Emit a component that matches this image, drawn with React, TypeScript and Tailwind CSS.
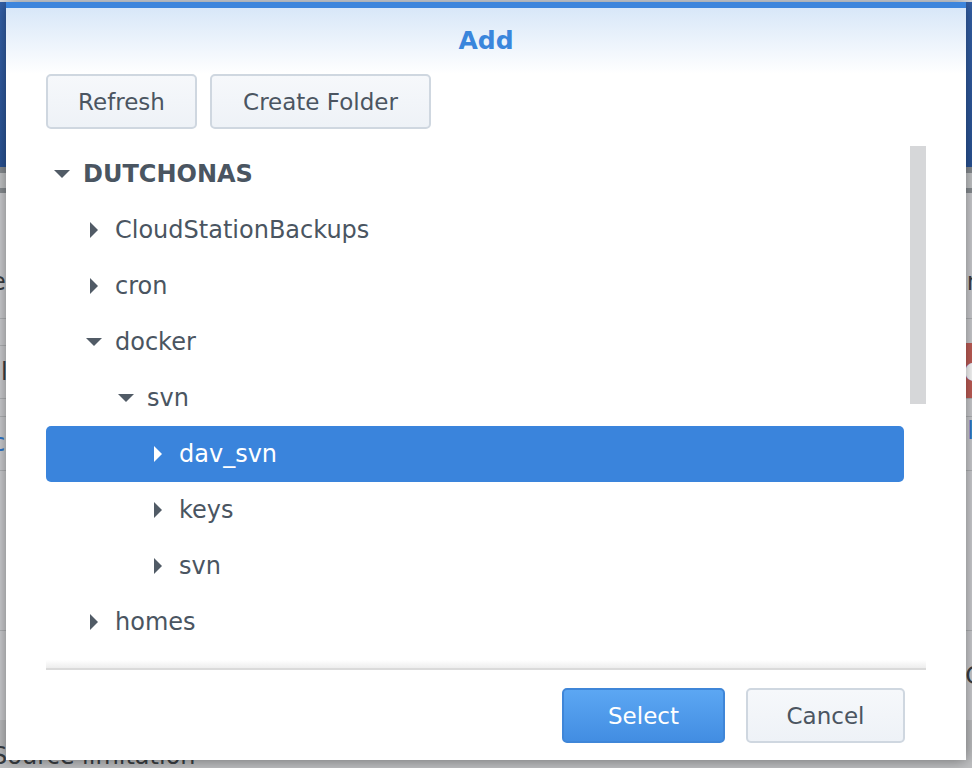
import { useState } from 'react';

type Node = { id: string; label: string; level: number; open?: boolean; bold?: boolean };

const nodes: Node[] = [
  { id: 'root', label: 'DUTCHONAS', level: 0, open: true, bold: true },
  { id: 'csb', label: 'CloudStationBackups', level: 1 },
  { id: 'cron', label: 'cron', level: 1 },
  { id: 'docker', label: 'docker', level: 1, open: true },
  { id: 'svn', label: 'svn', level: 2, open: true },
  { id: 'dav_svn', label: 'dav_svn', level: 3 },
  { id: 'keys', label: 'keys', level: 3 },
  { id: 'svn2', label: 'svn', level: 3 },
  { id: 'homes', label: 'homes', level: 1 },
  { id: 'music', label: 'music', level: 1 },
];

const indent = ['pl-[6px]', 'pl-[38px]', 'pl-[70px]', 'pl-[102px]'];

function Arrow({ open, light }: { open?: boolean; light?: boolean }) {
  const fill = light ? '#ffffff' : '#515b66';
  return (
    <span className="w-[20px] h-[20px] flex items-center justify-center shrink-0">
      {open ? (
        <svg width="16" height="8" viewBox="0 0 16 8">
          <path d="M0 0 L16 0 L8 8 Z" fill={fill} />
        </svg>
      ) : (
        <svg width="8" height="16" viewBox="0 0 8 16">
          <path d="M0 0 L8 8 L0 16 Z" fill={fill} />
        </svg>
      )}
    </span>
  );
}

function Background() {
  return (
    <div className="w-full h-screen flex flex-col bg-[#cfd0d3] text-[24px] font-['DejaVu_Sans',sans-serif] text-[#3a3f44] overflow-hidden">
      <div className="h-[2px] bg-[#dde2ea]" />
      <div className="h-[165px] bg-gradient-to-b from-[#3563ad] to-[#2b5598]" />
      <div className="h-[6px] bg-[#8b9095]" />
      <div className="h-[15px] bg-[#c6c8ca]" />
      <div className="h-[5px] bg-[#8b9095]" />
      <div className="h-[125px] flex justify-between items-start pt-[77px] leading-[24px]">
        <span className="-ml-[9px]">e</span>
        <span className="-mr-[10px]">n</span>
      </div>
      <div className="h-px bg-[#b3b5b8]" />
      <div className="h-[26px]" />
      <div className="h-px bg-[#b3b5b8]" />
      <div className="h-[52px] flex justify-between items-center">
        <span className="ml-[1px]">l</span>
        <span className="h-[55px] w-[60px] -mt-[3px] -mr-[50px] bg-[#c35f58] rounded-[4px] flex items-center pl-[2px] text-white">●</span>
      </div>
      <div className="h-px bg-[#b3b5b8]" />
      <div className="h-[17px]" />
      <div className="h-px bg-[#b3b5b8]" />
      <div className="h-[54px] flex justify-between items-center text-[#2f78d0]">
        <span className="-ml-[8px]">c</span>
        <span className="-mr-[2px] -mt-[24px]">l</span>
      </div>
      <div className="h-px bg-[#b3b5b8]" />
      <div className="h-[159px]" />
      <div className="h-px bg-[#b3b5b8]" />
      <div className="h-[89px] flex justify-end items-center">
        <span className="-mr-[10px]">C</span>
      </div>
      <div className="flex-1 bg-[#bfc0c2] pt-[24px] leading-[24px]">
        <span className="-ml-[8px] block">Source limitation</span>
      </div>
    </div>
  );
}

export default function App() {
  const [selected, setSelected] = useState('dav_svn');

  return (
    <div className="relative w-full h-screen overflow-hidden">
      <Background />

      {/* Dialog */}
      <div className="absolute left-[6px] top-[2px] w-[960px] h-[758px] bg-white border-t-[6px] border-[#3d85dc] shadow-[0_0_14px_rgba(0,0,0,0.45)] flex flex-col font-['DejaVu_Sans',sans-serif]">
        <div className="h-[66px] shrink-0 bg-gradient-to-b from-[#d8e7f8] to-white flex items-center justify-center">
          <span className="text-[25px] font-bold text-[#3a86dc]">Add</span>
        </div>

        <div className="h-[55px] shrink-0 flex gap-[13px] px-[40px]">
          <button className="w-[151px] h-full pt-[2px] rounded-[5px] border-2 border-[#cfd7e0] bg-gradient-to-b from-[#f6f8fb] to-[#eef2f7] text-[23px] text-[#4b5561]">
            Refresh
          </button>
          <button className="w-[221px] h-full pt-[2px] rounded-[5px] border-2 border-[#cfd7e0] bg-gradient-to-b from-[#f6f8fb] to-[#eef2f7] text-[23px] text-[#4b5561]">
            Create Folder
          </button>
        </div>

        <div className="mt-[17px] mx-[40px] flex flex-col">
          <div className="h-[514px] flex gap-[6px] overflow-hidden">
            <div className="flex-1 flex flex-col">
              {nodes.map(n => {
                const isSel = n.id === selected;
                return (
                  <div
                    key={n.id}
                    onClick={() => setSelected(n.id)}
                    className={`h-[56px] shrink-0 flex items-center rounded-[5px] ${indent[n.level]} ${
                      isSel ? 'bg-[#3a84dc] text-white' : 'text-[#4a5561]'
                    }`}
                  >
                    <Arrow open={n.open} light={isSel} />
                    <span className={`ml-[11px] text-[24px] ${n.bold ? 'font-bold' : ''}`}>{n.label}</span>
                  </div>
                );
              })}
            </div>
            <div className="w-[16px] shrink-0 flex flex-col">
              <div className="h-[258px] bg-[#d6d7d9]" />
            </div>
          </div>
          <div className="h-[8px] bg-gradient-to-b from-white to-[#ededed]" />
          <div className="h-[2px] bg-[#dadada]" />
        </div>

        <div className="flex-1 flex justify-end gap-[21px] pt-[18px] pr-[61px]">
          <button className="w-[163px] h-[55px] pt-[2px] rounded-[5px] border-2 border-[#3f86d8] bg-gradient-to-b from-[#5ca7f3] to-[#428de2] text-[23px] text-white">
            Select
          </button>
          <button className="w-[159px] h-[55px] pt-[2px] rounded-[5px] border-2 border-[#cfd7e0] bg-gradient-to-b from-[#f6f8fb] to-[#eef2f7] text-[23px] text-[#4b5561]">
            Cancel
          </button>
        </div>
      </div>
    </div>
  );
}
